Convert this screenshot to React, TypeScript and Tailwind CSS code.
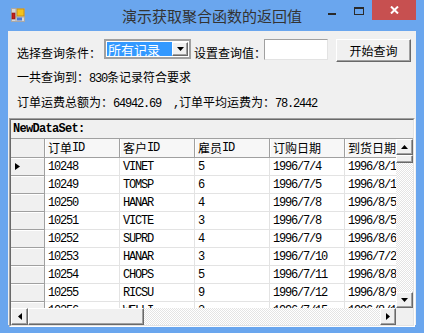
import type { ReactNode } from 'react'

const mono = "font-['Liberation_Mono',monospace] tracking-[-1.2px] whitespace-pre"

function Mixed({ text }: { text: string }) {
  const parts = text.split(/([\x20-\x7e]+)/).filter(Boolean)
  return (
    <>
      {parts.map((p, i) =>
        /^[\x20-\x7e]+$/.test(p) ? (
          <span key={i} className={mono}>
            {p}
          </span>
        ) : (
          <span key={i}>{p}</span>
        ),
      )}
    </>
  )
}

const columns = ['订单ID', '客户ID', '雇员ID', '订购日期', '到货日期']

const rows = [
  ['10248', 'VINET', '5', '1996/7/4', '1996/8/1'],
  ['10249', 'TOMSP', '6', '1996/7/5', '1996/8/16'],
  ['10250', 'HANAR', '4', '1996/7/8', '1996/8/5'],
  ['10251', 'VICTE', '3', '1996/7/8', '1996/8/5'],
  ['10252', 'SUPRD', '4', '1996/7/9', '1996/8/6'],
  ['10253', 'HANAR', '3', '1996/7/10', '1996/7/24'],
  ['10254', 'CHOPS', '5', '1996/7/11', '1996/8/8'],
  ['10255', 'RICSU', '9', '1996/7/12', '1996/8/9'],
  ['10256', 'WELLI', '3', '1996/7/15', '1996/8/12'],
]

function Arrow({ dir }: { dir: 'up' | 'down' | 'left' | 'right' }) {
  const pts = {
    up: '0,4 7,4 3.5,0',
    down: '0,0 7,0 3.5,4',
    left: '4,0 4,7 0,3.5',
    right: '0,0 0,7 4,3.5',
  }[dir]
  const vertical = dir === 'up' || dir === 'down'
  return (
    <svg width={vertical ? 7 : 4} height={vertical ? 4 : 7} viewBox={vertical ? '0 0 7 4' : '0 0 4 7'}>
      <polygon points={pts} fill="#000" />
    </svg>
  )
}

function RaisedBox({ className, children }: { className: string; children?: ReactNode }) {
  return (
    <div
      className={`flex items-center justify-center border border-t-white border-l-white border-r-[#696969] border-b-[#696969] bg-[#f0f0f0] shadow-[inset_-1px_-1px_0_#a0a0a0] ${className}`}
    >
      {children}
    </div>
  )
}

const checker =
  'bg-[image:repeating-conic-gradient(#ffffff_0%_25%,#e4e4e4_0%_50%)] bg-[length:2px_2px]'

function TitleBar() {
  return (
    <div className="grid h-[31px] shrink-0 grid-cols-[1fr_auto_1fr]">
      <div className="pl-[11px] pt-[8px]">
        <svg width="14" height="14" viewBox="0 0 14 14">
          <rect x="0.5" y="0.5" width="13" height="13" fill="#d8d8d8" stroke="#a8a8a8" />
          <line x1="5" y1="0" x2="5" y2="14" stroke="#a8a8a8" />
          <line x1="0" y1="9" x2="14" y2="9" stroke="#a8a8a8" />
          <rect x="6" y="1" width="7" height="7" fill="#f3c21d" stroke="#c08a10" strokeWidth="0.8" />
          <rect x="1" y="5" width="3" height="6" fill="#c4201c" stroke="#8a1010" strokeWidth="0.6" />
          <rect x="6" y="9.5" width="5" height="3" fill="#4a78d6" />
        </svg>
      </div>
      <div className="font-['Noto_Sans_CJK_SC',sans-serif] text-[15px] leading-[31px] text-[#333]">
        演示获取聚合函数的返回值
      </div>
      <div className="flex justify-end pr-[8px]">
        <div className="flex h-[20px] w-[26px] items-start justify-center pt-[13px]">
          <div className="h-[2px] w-[8px] bg-[#2a2a2a]" />
        </div>
        <div className="flex h-[20px] w-[27px] items-start justify-center pt-[7px]">
          <div className="h-[8px] w-[10px] border border-t-2 border-[#2a2a2a]" />
        </div>
        <div className="flex h-[20px] w-[44px] items-center justify-center bg-[#c75050]">
          <svg width="9" height="8" viewBox="0 0 9 8">
            <path d="M1 0.5 L8 7.5 M8 0.5 L1 7.5" stroke="#fff" strokeWidth="2" />
          </svg>
        </div>
      </div>
    </div>
  )
}

function DataGrid() {
  return (
    <div className="ml-[1px] mt-[6px] h-[209px] w-[406px] border border-t-[#a0a0a0] border-l-[#a0a0a0] border-r-white border-b-white">
      <div className="flex h-full flex-col border border-t-[#696969] border-l-[#696969] border-r-[#e3e3e3] border-b-[#e3e3e3]">
        <div className="flex h-[19px] shrink-0 items-center border-b border-[#a0a0a0] bg-[#f0f0f0] pl-[2px] font-['Liberation_Mono',monospace] text-[12px] font-bold tracking-[-0.7px] text-black">
          NewDataSet:
        </div>
        <div className="flex h-[169px] shrink-0">
          <div className="w-[385px] overflow-hidden bg-white">
            <div className="flex h-[19px] w-max border-b border-[#a0a0a0] bg-[#f7f7f7]">
              <div className="h-full w-[34px] shrink-0 border-r border-[#a0a0a0] bg-[#f0f0f0]" />
              {columns.map((c) => (
                <div
                  key={c}
                  className="flex h-full w-[75px] shrink-0 items-center border-r border-[#a0a0a0] pl-[3px] text-[12px] leading-none shadow-[inset_1px_0_0_#ffffff]"
                >
                  <Mixed text={c} />
                </div>
              ))}
            </div>
            {rows.map((r, i) => (
              <div key={r[0]} className="flex h-[18px] w-max">
                <div className="flex h-full w-[34px] shrink-0 items-center border-r border-b border-[#a0a0a0] bg-[#f0f0f0] pl-[4px] shadow-[inset_0_1px_0_#ffffff]">
                  {i === 0 ? (
                    <svg width="5" height="7" viewBox="0 0 5 7">
                      <polygon points="0,0 0,7 5,3.5" fill="#000" />
                    </svg>
                  ) : null}
                </div>
                {r.map((v, j) => (
                  <div
                    key={j}
                    className={`flex h-full w-[75px] shrink-0 items-center overflow-hidden border-r border-b border-[#e3e3e3] pl-[3px] text-[12px] leading-none text-black ${mono}`}
                  >
                    {v}
                  </div>
                ))}
              </div>
            ))}
          </div>
          <div className="flex w-[17px] shrink-0 flex-col">
            <RaisedBox className="h-[16px] shrink-0">
              <Arrow dir="up" />
            </RaisedBox>
            <RaisedBox className="h-[8px] shrink-0" />
            <div className={`flex-1 ${checker}`} />
            <RaisedBox className="h-[16px] shrink-0">
              <Arrow dir="down" />
            </RaisedBox>
          </div>
        </div>
        <div className="flex h-[17px] shrink-0">
          <RaisedBox className="w-[17px] shrink-0">
            <Arrow dir="left" />
          </RaisedBox>
          <RaisedBox className="w-[116px] shrink-0" />
          <div className={`flex-1 ${checker}`} />
          <RaisedBox className="w-[16px] shrink-0">
            <Arrow dir="right" />
          </RaisedBox>
          <div className="w-[17px] shrink-0 bg-[#f0f0f0]" />
        </div>
      </div>
    </div>
  )
}

export default function App() {
  return (
    <div className="flex h-[333px] w-[424px] flex-col bg-[#6aa6ee] font-['Noto_Sans_CJK_SC','Liberation_Sans',sans-serif] text-black">
      <TitleBar />
      <div className="mx-[8px] flex h-[294px] flex-col bg-[#f0f0f0] text-[12px]">
        <div className="flex items-start pl-[9px] pt-[8px]">
          <span className="mt-[6px] w-[84px] leading-[16px]">选择查询条件：</span>
          <div className="ml-[3px] flex h-[20px] w-[87px] items-stretch border-2 border-[#a0a0a0] bg-white p-px">
            <div className="flex w-[66px] items-center bg-[#3399ff] pl-[1px] text-[13px] leading-none text-white">
              所有记录
            </div>
            <RaisedBox className="ml-auto w-[16px]">
              <Arrow dir="down" />
            </RaisedBox>
          </div>
          <span className="ml-[3px] mt-[6px] w-[70px] whitespace-nowrap leading-[16px]">设置查询值：</span>
          <div className="h-[21px] w-[64px] border border-t-[#a0a0a0] border-l-[#a0a0a0] border-r-[#e3e3e3] border-b-[#e3e3e3] bg-white" />
          <div className="ml-[8px] flex h-[23px] w-[75px] items-center justify-center border border-t-white border-l-white border-r-[#696969] border-b-[#696969] bg-[#f0f0f0] shadow-[inset_-1px_-1px_0_#a0a0a0] text-[12px]">
            开始查询
          </div>
        </div>
        <div className="mt-[7px] pl-[9px] leading-[16px]">
          <Mixed text="一共查询到：830条记录符合要求" />
        </div>
        <div className="mt-[7px] pl-[9px] leading-[16px]">
          <Mixed text="订单运费总额为：64942.69  ,订单平均运费为：78.2442" />
        </div>
        <DataGrid />
      </div>
    </div>
  )
}
